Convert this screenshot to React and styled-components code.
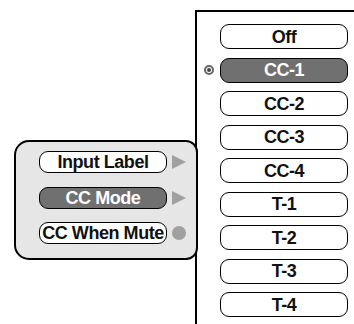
import React from "react";
import styled, { createGlobalStyle } from "styled-components";

const Global = createGlobalStyle`
  html, body { margin: 0; padding: 0; background: #fff; }
  body { font-family: "Liberation Sans", Arial, sans-serif; }
`;

const Screen = styled.div`
  width: 354px;
  height: 324px;
  overflow: hidden;
  display: flex;
  align-items: flex-start;
  padding-top: 10px;
  box-sizing: border-box;
`;

const LeftColumn = styled.div`
  width: 196px;
  flex: none;
  padding-left: 14px;
  padding-top: 130px;
  box-sizing: border-box;
  position: relative;
  z-index: 1;
`;

const MenuPanel = styled.div`
  width: 184px;
  height: 120px;
  box-sizing: border-box;
  border: 2px solid #000;
  border-radius: 15px 12px 12px 15px;
  background: #e6e6e6;
  padding: 9px 0 0 23px;
  display: flex;
  flex-direction: column;
  gap: 13.5px;
`;

const MenuRow = styled.div`
  display: flex;
  align-items: center;
  gap: 5px;
`;

const Pill = styled.div`
  box-sizing: border-box;
  width: ${(p) => p.$w}px;
  height: ${(p) => p.$h}px;
  border: 1.5px solid #000;
  border-radius: 9px;
  background: ${(p) => (p.$active ? "#707070" : "#fff")};
  color: ${(p) => (p.$active ? "#fff" : "#111")};
  font-family: "Liberation Sans", Arial, sans-serif;
  font-weight: bold;
  font-size: 18px;
  line-height: 1;
  display: flex;
  align-items: center;
  justify-content: center;
  white-space: nowrap;
  letter-spacing: -0.45px;
`;

const Arrow = styled.div`
  width: 0;
  height: 0;
  border-top: 7px solid transparent;
  border-bottom: 7px solid transparent;
  border-left: 14px solid #a0a0a0;
`;

const Dot = styled.div`
  width: 14px;
  height: 14px;
  border-radius: 50%;
  background: #a0a0a0;
`;

const OptionsPanel = styled.div`
  flex: 1;
  margin-left: -1px;
  height: 340px;
  box-sizing: border-box;
  border-top: 2px solid #000;
  border-left: 2px solid #000;
  background: #fff;
  padding-top: 12px;
  display: flex;
  flex-direction: column;
  gap: 8.5px;
`;

const OptionRow = styled.div`
  display: flex;
  align-items: center;
`;

const Slot = styled.div`
  width: 23px;
  flex: none;
  display: flex;
  justify-content: center;
  align-items: center;
`;

const Radio = styled.div`
  width: 10px;
  height: 10px;
  box-sizing: border-box;
  border: 2px solid #666;
  border-radius: 50%;
  background: #fff;
  display: flex;
  align-items: center;
  justify-content: center;
  &::after {
    content: "";
    width: 4px;
    height: 4px;
    border-radius: 50%;
    background: #444;
  }
`;

const menu = [
  { label: "Input Label", mark: "arrow" },
  { label: "CC Mode", mark: "arrow", active: true },
  { label: "CC When Mute", mark: "dot" },
];

const options = ["Off", "CC-1", "CC-2", "CC-3", "CC-4", "T-1", "T-2", "T-3", "T-4"];
const selected = "CC-1";

export default function App() {
  return (
    <>
      <Global />
      <Screen>
        <LeftColumn>
          <MenuPanel>
            {menu.map((m) => (
              <MenuRow key={m.label}>
                <Pill $w={128} $h={22} $active={m.active}>
                  {m.label}
                </Pill>
                {m.mark === "arrow" ? <Arrow /> : <Dot />}
              </MenuRow>
            ))}
          </MenuPanel>
        </LeftColumn>
        <OptionsPanel>
          {options.map((o) => (
            <OptionRow key={o}>
              <Slot>{o === selected && <Radio />}</Slot>
              <Pill $w={128} $h={25} $active={o === selected}>
                {o}
              </Pill>
            </OptionRow>
          ))}
        </OptionsPanel>
      </Screen>
    </>
  );
}
